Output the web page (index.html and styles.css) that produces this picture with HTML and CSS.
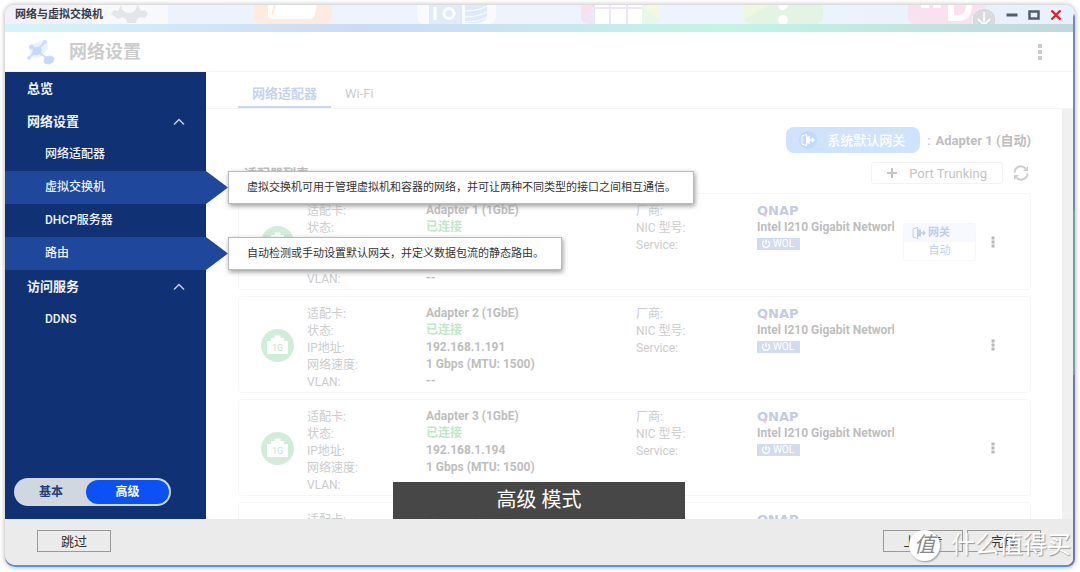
FILE: index.html
```html
<!DOCTYPE html>
<html lang="zh-CN">
<head>
<meta charset="utf-8">
<title>网络与虚拟交换机</title>
<link rel="stylesheet" href="styles.css">
</head>
<body>
<svg class="defs" width="0" height="0" aria-hidden="true">
  <symbol id="i-jack" viewBox="0 0 33 33">
    <circle cx="16.500" cy="16.500" r="16.500" fill="#d2ecda"/>
    <path d="M6 25V12h4V9h3.500V6.500h6V9H23v3h4v13z" fill="#fff"/>
  </symbol>
  <symbol id="i-dots" viewBox="0 0 4 12">
    <path d="M.5.5h3v3h-3zM.5 4.500h3v3h-3zM.5 8.500h3v3h-3z" fill="#b8b8b8"/>
  </symbol>
  <symbol id="i-up" viewBox="0 0 12 8">
    <path d="M1 6.500 6 1.500l5 5" fill="none" stroke="#c3cde0" stroke-width="1.500"/>
  </symbol>
  <symbol id="i-gate" viewBox="0 0 14 14">
    <path d="M5.500 12.500 1 11V3l4.500-1.500z" fill="none" stroke="currentColor"/>
    <path d="M5.500 3.500H9v7H5.500z" fill="currentColor"/>
    <path d="M9 7h4M11 5l2 2-2 2" fill="none" stroke="currentColor" stroke-width="1.300"/>
  </symbol>
  <symbol id="i-power" viewBox="0 0 10 10">
    <path d="M3 2a3.500 3.500 0 1 0 4 0M5 .5v4.500" fill="none" stroke="#fff" stroke-width="1.300"/>
  </symbol>
</svg>

<div class="frame">
<div class="window">
  <div class="titlebar">
    <svg class="backdrop" width="1068" height="19" viewBox="5 5 1068 19" aria-hidden="true">
      <rect x="92" y="-30" width="76" height="66" rx="14" fill="#f8f9fa"/>
      <path d="M111 14l3-4 4 1 3-6h17l3 6 4-1 3 4-3 4-5-1-3 2-1 4h-9l-1-4-4-2-4 2z" fill="#e3e5e7"/>
      <circle cx="129" cy="5" r="8" fill="#f8f9fa"/>
      <path d="M254 5h78v11q0 8-8 8h-62q-8 0-8-8z" fill="#fdebdf"/>
      <path d="M268 5h49l-2 9q-1 5-6 5h-36q-5 0-5-5z" fill="#fff"/>
      <path d="M272 15l3-10" stroke="#fdebdf" stroke-width="2"/>
      <path d="M417 5h79v10q0 9-8 9h-63q-8 0-8-9z" fill="#f8fafb"/>
      <path d="M429 5h33v19h-33z" fill="#e0ebf6"/>
      <path d="M435 7v13" stroke="#fff" stroke-width="3"/>
      <circle cx="449" cy="13.500" r="5" fill="none" stroke="#fff" stroke-width="3"/>
      <path d="M465 5h22v13q-5 5-13 5h-9z" fill="#dee9fb"/>
      <path d="M465 11q13 0 22-5M465 17q13 0 22-5M465 22q13 0 22-5" stroke="#fff" fill="none"/>
      <path d="M581 5h78v12q0 7-8 7h-62q-8 0-8-7z" fill="#eee6f6"/>
      <path d="M581 5h14v1l-14 13z" fill="#fbdfec"/>
      <path d="M642 5h17v12q0 7-8 7h-9z" fill="#e9f6ea"/>
      <path d="M643 5h16v15z" fill="#f5f8de"/>
      <path d="M595 5h14v2h-14zM611 5h15v2h-15zM628 5h14v2h-14zM595 9h14v15h-14zM611 9h15v15h-15zM628 9h14v15h-14z" fill="#fff"/>
      <path d="M744 5h79v12q0 7-8 7h-63q-8 0-8-7z" fill="#e4f4e4"/>
      <path d="M744 5h26l-26 14z" fill="#eff7df"/>
      <circle cx="783" cy="5" r="5" fill="#fff"/><circle cx="783" cy="20" r="5" fill="#fff"/>
      <path d="M908 5h78v12q0 7-8 7h-62q-8 0-8-7z" fill="#f9e1f0"/>
      <path d="M921 5h8v3h-8zM933 5h8v3h-8z" fill="#fff"/>
      <path d="M951 5v13h7q11 0 11-13" fill="none" stroke="#fff" stroke-width="6"/>
      <circle cx="984" cy="20" r="12" fill="#d9dadd" stroke="#f3f3f5"/>
      <path d="M984 12v12M978 19l6 6 6-6" fill="none" stroke="#fff" stroke-width="1.500"/>
    </svg>
    <span class="title">网络与虚拟交换机</span>
    <div class="controls">
      <button aria-label="最小化"><svg width="12" height="10" viewBox="0 0 12 10"><path d="M.5 5h11" stroke="#555c6c" stroke-width="3"/></svg></button>
      <button aria-label="最大化"><svg width="12" height="10" viewBox="0 0 12 10"><path d="M1.500 1.500h9v7h-9z" fill="none" stroke="#555c6c" stroke-width="2.500"/></svg></button>
      <button aria-label="关闭"><svg width="12" height="10" viewBox="0 0 12 10"><path d="M1.500 .5l9 9M10.500 .5l-9 9" stroke="#e5202b" stroke-width="2.400"/></svg></button>
    </div>
  </div>
  <div class="strip"></div>
  <header class="header">
    <svg width="30" height="26" viewBox="0 0 30 26" aria-hidden="true">
      <path d="M5 6l14-5 3 8-6 8-8 2-4-3z" fill="#eaf2fd"/>
      <path d="M3 19 19 3M6 8l17 13" stroke="#cadcfa" stroke-width="2"/>
      <circle cx="19" cy="3" r="2" fill="#cadcfa"/><circle cx="5.500" cy="8" r="2.500" fill="#cadcfa"/><circle cx="3" cy="19" r="1.800" fill="#cadcfa"/>
      <ellipse cx="11" cy="12" rx="5" ry="4" fill="#c5d9fa" transform="rotate(-35 11 12)"/>
      <ellipse cx="23" cy="21" rx="5.500" ry="4.200" fill="#c5d9fa" transform="rotate(-20 23 21)"/>
    </svg>
    <h1>网络设置</h1>
    <button class="more" aria-label="更多"><svg width="4" height="18" viewBox="0 0 4 18"><path d="M0 1h4v4H0zM0 7h4v4H0zM0 13h4v4H0z" fill="#ccc"/></svg></button>
  </header>

  <div class="body">
    <nav class="sidebar">
      <ul>
        <li class="group"><a href="#">总览</a></li>
        <li class="group"><a href="#">网络设置<svg width="12" height="8"><use href="#i-up"/></svg></a></li>
        <li><a href="#">网络适配器</a></li>
        <li class="active"><a href="#">虚拟交换机</a><p class="tip">虚拟交换机可用于管理虚拟机和容器的网络，并可让两种不同类型的接口之间相互通信。</p></li>
        <li><a href="#">DHCP服务器</a></li>
        <li class="active"><a href="#">路由</a><p class="tip">自动检测或手动设置默认网关，并定义数据包流的静态路由。</p></li>
        <li class="group"><a href="#">访问服务<svg width="12" height="8"><use href="#i-up"/></svg></a></li>
        <li><a href="#">DDNS</a></li>
      </ul>
      <div class="mode">
        <button>基本</button><button class="on">高级</button>
      </div>
    </nav>

    <main class="main">
      <div class="tabs">
        <button class="tab on">网络适配器</button><button class="tab">Wi-Fi</button>
      </div>
      <div class="scroller">
        <div class="content">
          <div class="gateway-row">
            <button class="gateway"><span class="disc"><svg width="14" height="14"><use href="#i-gate"/></svg></span>系统默认网关</button>
            <span class="colon">:</span><strong>Adapter 1 (自动)</strong>
          </div>
          <div class="list-row">
            <h2>适配器列表</h2>
            <button class="trunk"><svg width="10" height="10" viewBox="0 0 10 10"><path d="M5 0v10M0 5h10" stroke="#c4c4c4" stroke-width="2"/></svg>Port Trunking</button>
            <button class="refresh" aria-label="刷新"><svg width="16" height="16" viewBox="0 0 16 16"><path d="M1.500 7.500A6.300 6.300 0 0 1 12.500 3.500M14.500 8.500A6.300 6.300 0 0 1 3.500 12.500" fill="none" stroke="#cecece" stroke-width="2"/><path d="M15 1v5h-5zM1 15v-5h5z" fill="#cecece"/></svg></button>
          </div>

          <section class="card">
            <div class="jack"><svg width="33" height="33"><use href="#i-jack"/></svg><span>1G</span></div>
            <div class="labels"><span>适配卡:</span><span>状态:</span><span>IP地址:</span><span>网络速度:</span><span>VLAN:</span></div>
            <div class="values"><span>Adapter 1 (1GbE)</span><span class="ok">已连接</span><span>192.168.1.190</span><span>1 Gbps (MTU: 1500)</span><span>--</span></div>
            <div class="labels"><span>厂商:</span><span>NIC 型号:</span><span>Service:</span></div>
            <div class="values"><span class="brand">QNAP</span><span>Intel I210 Gigabit Network</span><span class="wol"><svg width="10" height="10"><use href="#i-power"/></svg>WOL</span></div>
            <div class="route"><span><svg width="14" height="14"><use href="#i-gate"/></svg><b>网关</b></span><span>自动</span></div>
            <button class="dots" aria-label="操作"><svg width="4" height="12"><use href="#i-dots"/></svg></button>
          </section>

          <section class="card">
            <div class="jack"><svg width="33" height="33"><use href="#i-jack"/></svg><span>1G</span></div>
            <div class="labels"><span>适配卡:</span><span>状态:</span><span>IP地址:</span><span>网络速度:</span><span>VLAN:</span></div>
            <div class="values"><span>Adapter 2 (1GbE)</span><span class="ok">已连接</span><span>192.168.1.191</span><span>1 Gbps (MTU: 1500)</span><span>--</span></div>
            <div class="labels"><span>厂商:</span><span>NIC 型号:</span><span>Service:</span></div>
            <div class="values"><span class="brand">QNAP</span><span>Intel I210 Gigabit Network</span><span class="wol"><svg width="10" height="10"><use href="#i-power"/></svg>WOL</span></div>
            <div></div>
            <button class="dots" aria-label="操作"><svg width="4" height="12"><use href="#i-dots"/></svg></button>
          </section>

          <section class="card">
            <div class="jack"><svg width="33" height="33"><use href="#i-jack"/></svg><span>1G</span></div>
            <div class="labels"><span>适配卡:</span><span>状态:</span><span>IP地址:</span><span>网络速度:</span><span>VLAN:</span></div>
            <div class="values"><span>Adapter 3 (1GbE)</span><span class="ok">已连接</span><span>192.168.1.194</span><span>1 Gbps (MTU: 1500)</span><span>--</span></div>
            <div class="labels"><span>厂商:</span><span>NIC 型号:</span><span>Service:</span></div>
            <div class="values"><span class="brand">QNAP</span><span>Intel I210 Gigabit Network</span><span class="wol"><svg width="10" height="10"><use href="#i-power"/></svg>WOL</span></div>
            <div></div>
            <button class="dots" aria-label="操作"><svg width="4" height="12"><use href="#i-dots"/></svg></button>
          </section>

          <section class="card">
            <div></div>
            <div class="labels"><span>适配卡:</span></div>
            <div class="values"><span>Adapter 4 (1GbE)</span></div>
            <div class="labels"><span>厂商:</span></div>
            <div class="values"><span class="brand">QNAP</span></div>
          </section>
        </div>
        <div class="track"></div>
      </div>
    </main>
    <div class="toast">高级 模式</div>
  </div>

  <footer class="footer">
    <button class="skip">跳过</button>
    <button class="prev">上一步</button>
    <button class="done">完成</button>
  </footer>
</div>
</div>
<div class="mark"><span class="seal">值</span>什么值得买</div>
</body>
</html>
```

FILE: styles.css
```css
* { box-sizing: border-box; margin: 0; padding: 0; }

body {
  background: #fff;
  color: #333;
  font: 12px/17px Roboto, "Noto Sans CJK SC", sans-serif;
  overflow: hidden;
}

button { border: 0; background: none; color: inherit; font: inherit; }
svg { display: block; flex: none; }
a { color: inherit; text-decoration: none; }
ul { list-style: none; }
.defs { position: absolute; }

.frame {
  height: calc(100vh - 10px);
  margin: 5px;
  padding: 0 2px 2px 0;
  border-radius: 10px 10px 8px 10px;
  background:
    linear-gradient(#4a95ee, #4a95ee) bottom / 100% 2px no-repeat,
    linear-gradient(#e8f0fc 0 8px, #7089b5 12px 205px, #6f9ea5 205px 370px, #6f78ad 370px);
  box-shadow: 0 0 4px 1px #c4c4c4;
}

.window {
  display: flex;
  flex-direction: column;
  height: 100%;
  border-radius: 10px 9px 7px 10px;
  background: #fff;
  overflow: hidden;
}

.titlebar {
  position: relative;
  display: flex;
  align-items: center;
  justify-content: space-between;
  height: 19px;
  padding: 0 11px 0 10px;
  background: linear-gradient(90deg, #f4eff9, #edf3fc 120px, #edf4fd 70%, #e8f0fc);
  flex: none;
}
.backdrop { position: absolute; left: 0; top: 0; }
.title { position: relative; font-size: 11px; font-weight: 700; color: #3a3d42; }
.controls { position: relative; display: flex; gap: 10px; }

.strip {
  height: 8px;
  flex: none;
  background: linear-gradient(90deg, #d4f6f8, #cbdaf9 33%, #c1f5e6 68%, #bfd8de);
}

.header {
  display: flex;
  align-items: center;
  gap: 13px;
  height: 40px;
  padding: 1px 31px 0 21px;
  border-bottom: 1px solid #f4f4f4;
  flex: none;
}
.header h1 { font-size: 18px; line-height: 24px; color: #ccc; }
.more { margin-left: auto; }

.body { position: relative; display: flex; flex: 1; min-height: 0; }

.sidebar {
  display: flex;
  flex-direction: column;
  justify-content: space-between;
  width: 201px;
  padding-bottom: 13px;
  background: #103275;
  color: #eef2fa;
  flex: none;
}
.sidebar li { position: relative; height: 33px; }
.sidebar a {
  display: flex;
  align-items: center;
  justify-content: space-between;
  height: 33px;
  padding: 0 21px 0 40px;
  font-weight: 500;
}
.sidebar .group a { padding-left: 22px; font-size: 13px; font-weight: 700; }
.sidebar .active { background: #1f479b; }
.sidebar .active::after {
  content: "";
  position: absolute;
  left: 100%;
  top: 0;
  width: 22px;
  height: 33px;
  background: #1f479b;
  clip-path: polygon(0 0, 100% 50%, 0 100%);
}
.tip {
  position: absolute;
  left: calc(100% + 22px);
  top: 0;
  z-index: 2;
  padding: 7px 17px 7px 18px;
  border: 1px solid #bbb;
  background: #fff;
  box-shadow: 1px 2px 5px #999;
  color: #333;
  font-size: 11px;
  white-space: nowrap;
}

.mode {
  display: flex;
  width: 157px;
  margin-left: 9px;
  padding: 2px;
  border-radius: 14px;
  background: #d0d7df;
}
.mode button { flex: 1; height: 24px; border-radius: 12px; color: #1f3f7e; font-size: 12px; font-weight: 700; }
.mode .on { flex: none; width: 83px; background: #0a52f5; color: #fff; }

.main { display: flex; flex-direction: column; flex: 1; min-width: 0; }
.tabs {
  display: flex;
  height: 37px;
  padding-left: 32px;
  border-bottom: 1px solid #f4f4f4;
  flex: none;
  color: #ccc;
}
.tab { padding: 6px 14px 0; font-size: 13px; }
.tab.on { border-bottom: 2px solid #c9d8f2; color: #c5d3ef; font-weight: 700; padding-top: 8px; }

.scroller { display: flex; flex: 1; min-height: 0; overflow: hidden; }
.track { width: 11px; background: #f0f0f0; }
.content { flex: 1; min-width: 0; padding: 18px 31px 0 32px; }

.gateway-row { display: flex; align-items: center; color: #bebebe; font-size: 13px; justify-content: flex-end; }
.gateway {
  display: flex;
  align-items: center;
  gap: 10px;
  height: 26px;
  padding: 0 15px 0 13px;
  border-radius: 8px;
  background: #cfe2fe;
  color: #fff;
  font-weight: 500;
}
.disc { padding: 2px; border-radius: 50%; background: #c2dafb; }
.colon { padding: 0 5px 0 7px; }

.list-row { display: flex; align-items: center; gap: 10px; padding: 9px 2px 9px 6px; }
.list-row h2 { flex: 1; font-size: 13px; line-height: 17px; color: #bebebe; }
.trunk {
  display: flex;
  align-items: center;
  gap: 12px;
  height: 22px;
  padding: 0 15px;
  border: 1px solid #f3f3f3;
  border-radius: 3px;
  color: #c4c4c4;
  font-size: 13px;
}

.card {
  display: grid;
  grid-template-columns: 46px 119px 1fr 121px 137px 91px 45px;
  height: 97px;
  margin-bottom: 6px;
  padding: 8px 0 0 22px;
  border: 1px solid #f6f6f6;
  border-radius: 4px;
}
.labels, .values { display: flex; flex-direction: column; min-width: 0; white-space: nowrap; }
.labels { color: #ccc; padding-top: 1px; }
.values { color: #bebebe; font-weight: 700; overflow: hidden; align-items: flex-start; }
.values .ok { color: #bfe8c9; }
.brand { position: relative; color: #c3cbe4; font-family: "DejaVu Sans", sans-serif; font-size: 13px; }
.brand::after {
  content: "";
  position: absolute;
  left: 7px;
  bottom: 4px;
  width: 3px;
  height: 2px;
  background: #f3c3cf;
}
.wol {
  display: flex;
  align-items: center;
  gap: 2px;
  height: 12px;
  margin-top: 2px;
  padding: 0 6px 0 4px;
  background: #d3dcec;
  color: #fff;
  font-size: 10px;
  line-height: 12px;
  font-weight: 400;
}
.jack { position: relative; align-self: start; margin-top: 24px; width: 33px; }
.jack span {
  position: absolute;
  left: 0;
  right: 0;
  top: 12px;
  color: #c3e5cd;
  font-size: 9px;
  line-height: 14px;
  text-align: center;
}
.route {
  align-self: start;
  width: 73px;
  margin: 21px 0 0 9px;
  border: 1px solid #f5f7fb;
  border-radius: 3px;
  color: #bdcfec;
  font-size: 11px;
  line-height: 18px;
  text-align: center;
}
.route span { display: block; }
.route span:first-child { display: flex; align-items: center; gap: 2px; padding-left: 8px; background: #f6f9ff; }
.dots { align-self: start; justify-self: start; margin: 34px 0 0 6px; }

.toast {
  position: absolute;
  left: 388px;
  bottom: 0;
  width: 292px;
  padding: 6px 0 7px;
  background: rgba(64, 64, 64, 0.96);
  color: #fff;
  font-size: 20px;
  line-height: 24px;
  text-align: center;
}

.footer {
  display: flex;
  align-items: flex-start;
  gap: 4px;
  height: 46px;
  padding: 11px 32px 0;
  background: #ebebeb;
  flex: none;
}
.footer button { height: 22px; border: 1px solid #999; font-size: 13px; color: #333; }
.skip, .done { width: 74px; }
.prev { width: 80px; margin-left: auto; }

.mark {
  position: absolute;
  right: 9px;
  bottom: 11px;
  display: flex;
  align-items: center;
  gap: 11px;
  color: #fff;
  font-size: 24px;
  line-height: 32px;
  text-shadow: 1px 1px 1px #999;
  pointer-events: none;
}
.seal {
  width: 31px;
  height: 31px;
  border-radius: 50%;
  background: #fff;
  box-shadow: 1px 1px 2px #999;
  color: #888;
  font-size: 21px;
  line-height: 30px;
  font-style: italic;
  text-align: center;
  text-shadow: none;
}
```
